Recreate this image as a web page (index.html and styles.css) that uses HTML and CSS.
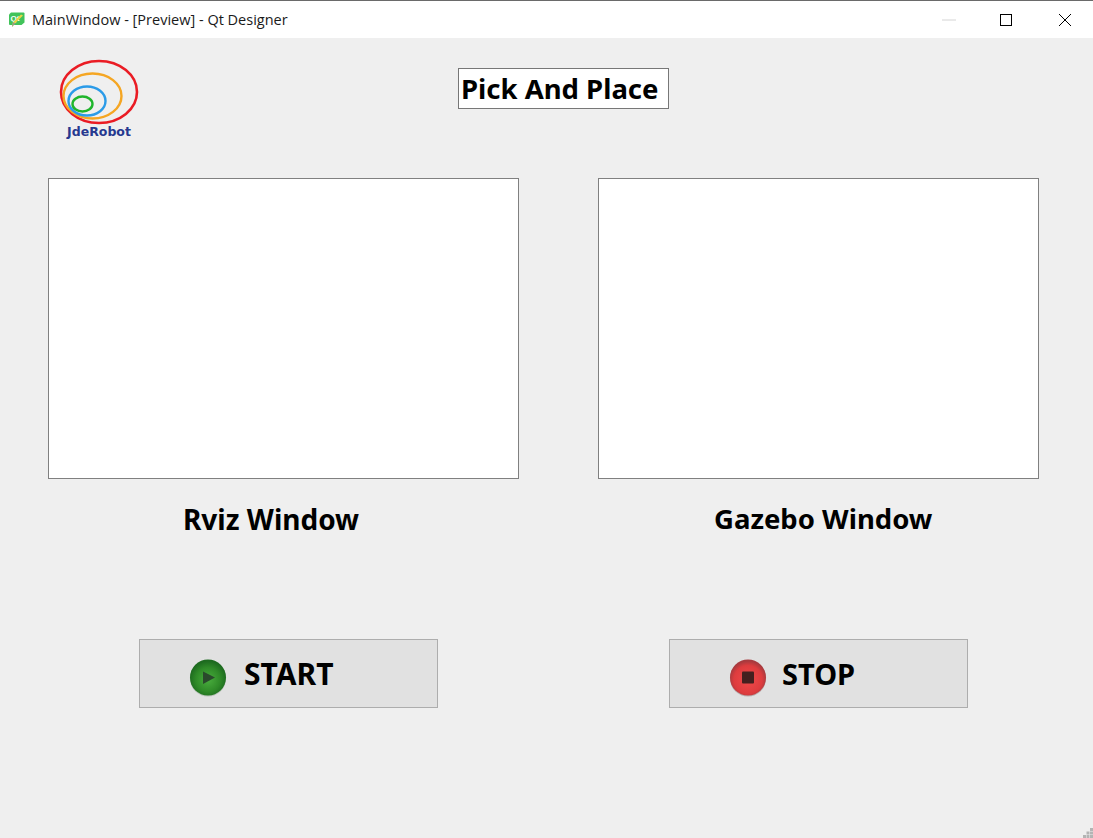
FILE: index.html
```html
<!DOCTYPE html>
<html lang="en">
<head>
  <meta charset="UTF-8">
  <title>MainWindow - [Preview] - Qt Designer</title>
  <link rel="stylesheet" href="styles.css">
</head>
<body>
  <!-- Title Bar -->
  <div class="titlebar">
    <svg class="app-icon" width="17" height="17" viewBox="0 0 17 17">
      <path d="M3 1.500h12.500a1 1 0 0 1 1 1v9l-3 2.500H2a1 1 0 0 1-1-1V3.500z" fill="#41c35a"/>
      <text x="2.500" y="10" class="app-icon-text">Qt</text>
      <path d="M15 4.500L7.500 12 4 16l.8-4.500L13 3.500z" fill="#e8d44a"/>
      <path d="M7.500 12L4 16l.8-4.500z" fill="#8f9a8a"/>
    </svg>
    <span class="title-text">MainWindow - [Preview] - Qt Designer</span>
    <div class="win-buttons">
      <svg class="win-btn" width="16" height="16" viewBox="0 0 16 16"><path d="M1 8h14" stroke="#d4d4d4"/></svg>
      <svg class="win-btn" width="16" height="16" viewBox="0 0 16 16"><rect x="1.500" y="2.500" width="11" height="11" fill="none" stroke="#000"/></svg>
      <svg class="win-btn" width="16" height="16" viewBox="0 0 16 16"><path d="M2 2l12 12M14 2L2 14" stroke="#000" fill="none"/></svg>
    </div>
  </div>

  <div class="content">
    <!-- Header -->
    <div class="header">
      <div class="logo">
        <svg width="82" height="66" viewBox="0 0 82 66">
          <ellipse cx="41" cy="33" rx="38" ry="31" fill="none" stroke="#ea1c24" stroke-width="2.600"/>
          <ellipse cx="34.500" cy="37" rx="29" ry="22.500" fill="none" stroke="#f5a623" stroke-width="2.400"/>
          <ellipse cx="29" cy="42" rx="18.500" ry="14.500" fill="none" stroke="#2b9be8" stroke-width="2.400"/>
          <ellipse cx="24.500" cy="45" rx="10" ry="7.500" fill="none" stroke="#1fb52c" stroke-width="2.400"/>
        </svg>
        <div class="logo-text">JdeRobot</div>
      </div>
      <div class="page-title">Pick And Place</div>
    </div>

    <!-- Video Panels -->
    <div class="panels">
      <div class="panel-col left">
        <div class="panel"></div>
        <div class="caption">Rviz Window</div>
      </div>
      <div class="panel-col right">
        <div class="panel"></div>
        <div class="caption">Gazebo Window</div>
      </div>
    </div>

    <!-- Buttons -->
    <div class="actions">
      <button class="btn start-btn">
        <svg width="38" height="38" viewBox="0 0 38 38">
          <defs>
            <radialGradient id="greenBall" cx="50%" cy="56%" r="52%">
              <stop offset="0" stop-color="#4aae3e"/>
              <stop offset="0.65" stop-color="#2f8a28"/>
              <stop offset="1" stop-color="#1d6a1f"/>
            </radialGradient>
          </defs>
          <circle cx="19" cy="19.500" r="18" fill="#b9c4b9"/>
          <circle cx="19" cy="18.500" r="18" fill="url(#greenBall)"/>
          <path d="M14 12.500L26 18.500 14 25z" fill="#2a4a2c"/>
        </svg>
        <span>START</span>
      </button>
      <button class="btn stop-btn">
        <svg width="38" height="38" viewBox="0 0 38 38">
          <defs>
            <radialGradient id="redBall" cx="50%" cy="56%" r="52%">
              <stop offset="0" stop-color="#ee4a4a"/>
              <stop offset="0.75" stop-color="#de3c3e"/>
              <stop offset="1" stop-color="#a83a3e"/>
            </radialGradient>
          </defs>
          <circle cx="19" cy="19.500" r="18" fill="#b8b0b0"/>
          <circle cx="19" cy="18.500" r="18" fill="url(#redBall)"/>
          <rect x="13" y="12.500" width="12" height="12" rx="1" fill="#43201f"/>
        </svg>
        <span>STOP</span>
      </button>
    </div>
  </div>

  <!-- Size Grip -->
  <svg class="grip" width="10" height="10" viewBox="0 0 10 10">
    <path d="M7 0h3v3H7zM3.500 3.500h3v3h-3zM7 3.500h3v3H7zM0 7h3v3H0zM3.500 7h3v3h-3zM7 7h3v3H7z" fill="#b4b4b4"/>
  </svg>
</body>
</html>
```

FILE: styles.css
```css
/* General Styles */
html,
body {
  height: 100%;
}

body {
  margin: 0;
  background: #efefef;
  font-family: 'Noto Sans', 'Open Sans', sans-serif;
  color: #000;
  overflow: hidden;
}

/* Title Bar */
.titlebar {
  display: flex;
  align-items: center;
  height: 37px;
  padding-left: 8px;
  background: #fff;
  border-top: 1px solid #6a6a6a;
}

.app-icon {
  margin-right: 7px;
}

.app-icon-text {
  font-family: 'Liberation Sans', sans-serif;
  font-size: 8px;
  font-weight: bold;
  fill: #fff;
}

.title-text {
  font-family: 'Open Sans', sans-serif;
  font-size: 14.5px;
  color: #1a1a1a;
}

.win-buttons {
  display: flex;
  gap: 42px;
  margin-left: auto;
  margin-right: 20px;
}

/* Content */
.content {
  padding-left: 48px;
}

.header {
  display: flex;
  height: 140px;
}

.logo {
  width: 82px;
  margin: 21px 0 0 10px;
}

.logo svg {
  display: block;
}

.logo-text {
  margin: -1px 0 0 0;
  text-align: center;
  font-family: 'DejaVu Sans', sans-serif;
  font-size: 12.500px;
  font-weight: bold;
  line-height: 15px;
  color: #26398f;
}

.page-title {
  align-self: flex-start;
  box-sizing: border-box;
  width: 211px;
  height: 41px;
  margin: 30px 0 0 318px;
  padding-left: 2px;
  background: #fff;
  border: 1px solid #777;
  font-size: 27.500px;
  font-weight: 700;
  line-height: 39px;
  white-space: nowrap;
}

/* Video Panels */
.panels {
  display: flex;
  gap: 79px;
}

.panel {
  box-sizing: border-box;
  height: 301px;
  background: #fff;
  border: 1px solid #808080;
}

.left {
  width: 471px;
}

.right {
  width: 441px;
}

.caption {
  margin-top: 20px;
  font-weight: 700;
  line-height: 40px;
}

.left .caption {
  padding-left: 135px;
  font-size: 28px;
}

.right .caption {
  padding-left: 116px;
  font-size: 27.500px;
}

/* Buttons */
.actions {
  display: flex;
  gap: 231px;
  margin: 100px 0 0 91px;
}

.btn {
  display: flex;
  align-items: center;
  box-sizing: border-box;
  width: 299px;
  height: 69px;
  padding: 2px 0 0;
  background: #e1e1e1;
  border: 1px solid #adadad;
  font-family: inherit;
  font-weight: 700;
  color: #000;
}

.btn svg {
  flex: none;
  margin-top: 6px;
}

.btn span {
  margin-top: -3px;
}

.start-btn {
  padding-left: 49px;
  gap: 17px;
  font-size: 30px;
}

.stop-btn {
  padding-left: 59px;
  gap: 15px;
  font-size: 29px;
}

/* Size Grip */
.grip {
  position: absolute;
  right: 0;
  bottom: 0;
}
```
